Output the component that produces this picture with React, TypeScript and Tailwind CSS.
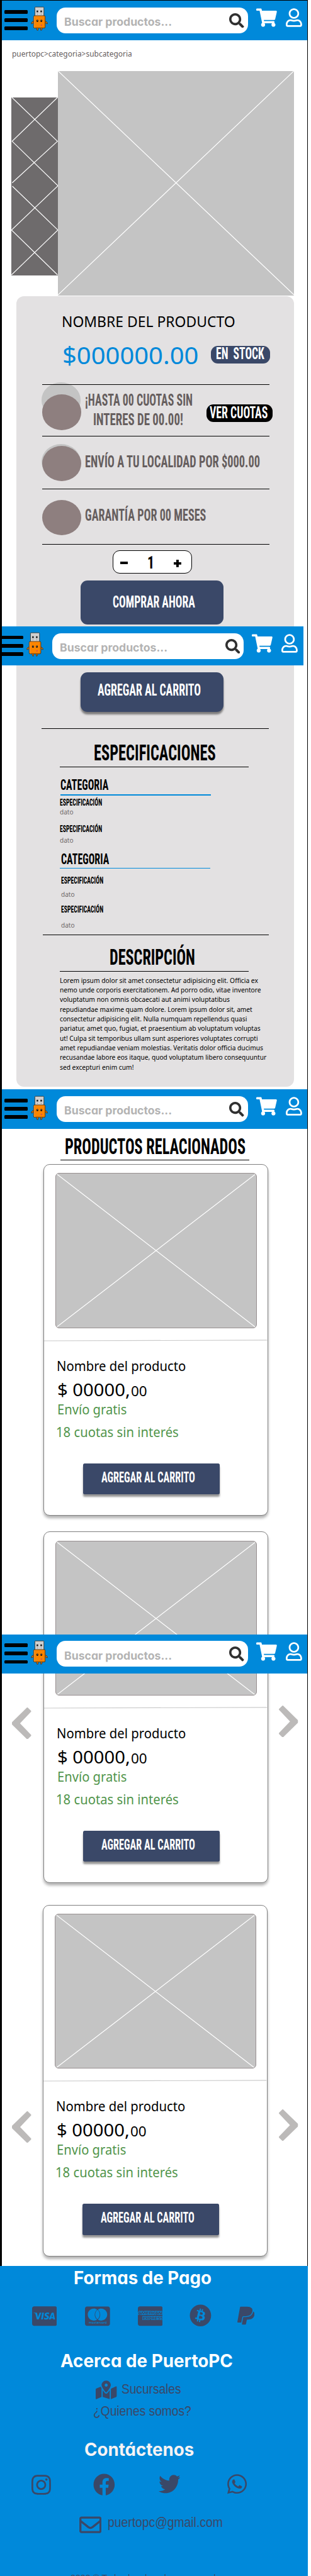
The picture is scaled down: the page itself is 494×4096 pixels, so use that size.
import { useLayoutEffect, useRef, type ReactNode } from "react";
import {
  FaCcVisa,
  FaCcMastercard,
  FaCcAmex,
  FaBitcoin,
  FaPaypal,
  FaMapMarkedAlt,
  FaInstagram,
  FaFacebook,
  FaTwitter,
  FaWhatsapp,
  FaRegEnvelope,
  FaRegUser,
  FaSearch,
  FaShoppingCart,
} from "react-icons/fa";

const display = "font-['Roboto',sans-serif] font-bold [font-stretch:75%]";
const body = "font-['Noto_Sans',sans-serif]";
const round = "font-['Inter',sans-serif] font-bold [font-feature-settings:'cv11']";
const arial = "font-['Liberation_Sans',sans-serif]";

/** One line of text, condensed or widened to fill the width of its box. */
function Fit({ className, children }: { className: string; children: ReactNode }) {
  const box = useRef<HTMLDivElement>(null);
  const line = useRef<HTMLSpanElement>(null);
  useLayoutEffect(() => {
    const fit = () => {
      if (!box.current || !line.current) return;
      const natural = line.current.offsetWidth;
      const wanted = parseFloat(getComputedStyle(box.current).width);
      if (natural > 0) line.current.style.transform = `scaleX(${wanted / natural})`;
    };
    fit();
    document.fonts?.ready.then(fit);
  }, []);
  return (
    <div ref={box} className={`shrink-0 whitespace-nowrap ${className}`}>
      <span ref={line} className="inline-block origin-left align-top">
        {children}
      </span>
    </div>
  );
}

function Robot() {
  return (
    <svg viewBox="250 52 140 200" preserveAspectRatio="none" className="h-[39.2px] w-[27.4px] shrink-0">
      <g stroke="#3b2a1a" strokeWidth="4" strokeLinejoin="round">
        <path d="M272 172l-14 8-5 13 8 1 11-9zM367 172l13 8 6 13-8 1-11-9z" fill="#e67d0c" />
        <path d="M295 228l4 17 8 3 4-20zM328 228l3 20 7-3 5-17z" fill="#e67d0c" />
        <rect x="283" y="58" width="73" height="74" rx="5" fill="#cfcfcf" />
        <rect x="272" y="128" width="95" height="101" rx="9" fill="#fb8500" />
      </g>
      <path d="M277 135v84q0 6 6 6" stroke="#e0a060" strokeWidth="4" fill="none" />
      <path d="M362 135v82q0 8-8 8h-66" stroke="#b96508" strokeWidth="4" fill="none" />
      <path d="M297 87h12v13h-12zM328 87h12v13h-12z" fill="#111" />
      <path d="M300 112h6v6h-6zM331 112h6v6h-6z" fill="#8a8a8a" />
      <ellipse cx="303" cy="170" rx="8" ry="10" fill="#1c1410" />
      <ellipse cx="335" cy="170" rx="8" ry="10" fill="#1c1410" />
      <circle cx="305" cy="166" r="2.5" fill="#fff" />
      <circle cx="333" cy="166" r="2.5" fill="#fff" />
      <circle cx="336" cy="205" r="6" fill="#d4524f" />
    </svg>
  );
}

function Header({ className }: { className: string }) {
  return (
    <header className={`flex items-start overflow-hidden bg-[#0089da] ${className}`}>
      <div className="mt-[14.7px] ml-[4px] flex w-[36.2px] shrink-0 flex-col gap-[7.2px]">
        <div className="h-[5.9px] rounded-[1.5px] bg-black" />
        <div className="h-[5.9px] rounded-[1.5px] bg-black" />
        <div className="h-[5.9px] rounded-[1.5px] bg-black" />
      </div>
      <div className="mt-[9.2px] ml-[5.3px] shrink-0">
        <Robot />
      </div>
      <div className="mt-[10.7px] ml-[14.1px] flex h-[41px] w-[303.7px] shrink-0 items-start rounded-[14px] bg-white">
        <Fit className={`mt-[16.2px] ml-[11.7px] h-[13px] w-[171.4px] text-[18px] leading-[13px] text-[#b3b3b3] ${round}`}>
          Buscar productos...
        </Fit>
        <FaSearch className="mt-[9px] ml-[91px] h-[23.6px] w-[23.6px] shrink-0 text-[#303030]" />
      </div>
      <FaShoppingCart className="mt-[12px] ml-[12.9px] h-[30px] w-[32.8px] shrink-0 text-white" />
      <FaRegUser className="mt-[12px] ml-[14.2px] h-[30px] w-[25.8px] shrink-0 text-white" />
    </header>
  );
}

function Gallery() {
  return (
    <section className="mt-[22.8px] flex items-start pl-[14.2px]">
      <svg
        viewBox="0 0 74.8 282.6"
        preserveAspectRatio="none"
        className="mt-[42.4px] h-[282.6px] w-[74.1px] shrink-0 bg-[#6e6b6c]"
      >
        <path
          d="M1 0L74 69.6L1.3 135.7M74 0L1.3 69.6L74.7 140.4L.3 210.8L74 282M1.6 141L74.7 210.8L.3 282"
          fill="none"
          stroke="#fff"
          strokeWidth="1.2"
        />
      </svg>
      <svg
        viewBox="0 0 378.7 356.7"
        preserveAspectRatio="none"
        className="h-[356.7px] w-[375.2px] shrink-0 bg-[#c4c4c4]"
      >
        <path d="M.5 0L378.7 356M378.2 0L0 356" stroke="#fff" strokeWidth="1.2" />
      </svg>
    </section>
  );
}

function Circle({ className }: { className: string }) {
  return <div className={`h-[56.5px] w-[62.4px] rounded-[50%] ${className}`} />;
}

function Rule({ className }: { className: string }) {
  return <div className={`relative z-10 shrink-0 ${className}`} />;
}

const benefit = `h-[18px] text-[25.2px] leading-[18px] text-[#665e5e] ${display}`;

function Purchase() {
  return (
    <>
      <Fit className={`mt-[31.4px] ml-[72.2px] h-[17.1px] w-[276px] text-[24px] leading-[17.1px] text-black ${body}`}>
        NOMBRE DEL PRODUCTO
      </Fit>
      <div className="mt-[30.5px] ml-[73.2px] flex h-[28.1px] shrink-0">
        <Fit className={`h-[28.4px] w-[216.9px] text-[38.5px] leading-[28.4px] text-[#0089da] ${body}`}>$000000.00</Fit>
        <div className="ml-[19.2px] h-[28.1px] w-[94.1px] rounded-[11px] bg-[#3a4868] pt-[4.5px] pl-[7.5px]">
          <Fit className={`h-[18px] w-[76.9px] text-[25px] leading-[18px] text-white ${display}`}>EN&nbsp; STOCK</Fit>
        </div>
      </div>
      <Rule className="mt-[33.2px] ml-[41.3px] h-px w-[361.1px] bg-black" />
      <div className="ml-[41.3px] flex h-[81.4px] shrink-0 items-start">
        <div className="relative pt-[15.5px]">
          <Circle className="absolute top-[-3.5px] left-[-1.2px] bg-[#c4c4c4]" />
          <Circle className="relative bg-[#8e7f7f]" />
        </div>
        <div className="ml-[5.1px] pt-[16.2px]">
          <Fit className={`w-[171.1px] ${benefit}`}>¡HASTA 00 CUOTAS SIN</Fit>
          <Fit className={`mt-[12.6px] ml-[13.9px] w-[143px] ${benefit}`}>INTERES DE 00.00!</Fit>
        </div>
        <div className="mt-[30.7px] ml-[22.7px] h-[28.1px] w-[104.6px] rounded-[11px] bg-black pt-[5.5px] pl-[5.1px]">
          <Fit className={`h-[18px] w-[92.1px] text-[25px] leading-[18px] text-white ${display}`}>VER CUOTAS</Fit>
        </div>
      </div>
      <Rule className="ml-[41.3px] h-px w-[361.1px] bg-black" />
      <div className="ml-[41.3px] flex h-[82.6px] shrink-0 items-start">
        <div className="relative pt-[14.2px]">
          <Circle className="absolute top-[11.6px] left-[-1.2px] bg-[#c4c4c4]" />
          <Circle className="relative bg-[#8e7f7f]" />
        </div>
        <Fit className={`mt-[31.6px] ml-[5.1px] w-[278.2px] ${benefit}`}>ENVÍO A TU LOCALIDAD POR $000.00</Fit>
      </div>
      <Rule className="ml-[41.3px] h-px w-[361.1px] bg-black" />
      <div className="ml-[41.3px] flex h-[87.2px] shrink-0 items-start">
        <Circle className="mt-[16.6px] bg-[#8e7f7f]" />
        <Fit className={`mt-[32.6px] ml-[5.1px] w-[192.5px] ${benefit}`}>GARANTÍA POR 00 MESES</Fit>
      </div>
      <Rule className="ml-[41.3px] h-px w-[361.1px] bg-black" />
      <div className="mt-[8.5px] ml-[152.9px] flex h-[37.4px] w-[126.1px] shrink-0 items-start rounded-[11px] border border-black bg-white">
        <div className="mt-[17.5px] ml-[11.6px] h-[3.8px] w-[11.7px] bg-black" />
        <Fit className={`mt-[9.4px] ml-[31.3px] h-[20px] w-[11px] text-[28px] leading-[20px] text-black ${display}`}>1</Fit>
        <svg viewBox="0 0 12 12" preserveAspectRatio="none" className="mt-[14.6px] ml-[30.7px] h-[11.7px] w-[11.9px]">
          <path d="M4 0h4v4h4v4H8v4H4V8H0V4h4z" />
        </svg>
      </div>
      <button className="mt-[10.8px] ml-[102.4px] flex h-[70.5px] w-[226.8px] shrink-0 items-start rounded-[11px] bg-[#3a4868]">
        <Fit className={`mt-[25.3px] ml-[51.1px] h-[18px] w-[131px] text-left text-[25.5px] leading-[18px] text-white ${display}`}>
          COMPRAR AHORA
        </Fit>
      </button>
      <button className="mt-[75.5px] ml-[102.4px] flex h-[63.7px] w-[226.8px] shrink-0 items-start rounded-[11px] bg-[#3a4868] shadow-[0_4px_3px_rgba(0,0,0,0.45)]">
        <Fit className={`mt-[19.6px] ml-[27.3px] h-[18px] w-[163.8px] text-left text-[25.5px] leading-[18px] text-white ${display}`}>
          AGREGAR AL CARRITO
        </Fit>
      </button>
      <Rule className="mt-[25.4px] ml-[40.1px] h-px w-[361.1px] bg-black" />
    </>
  );
}

const category = `h-[16.5px] w-[75.9px] text-[23px] leading-[16.5px] text-black ${display}`;
const spec = `h-[10px] w-[66.8px] text-[14px] leading-[10px] text-black ${display}`;
const datum = `h-[8.4px] w-[21.4px] text-[11.3px] leading-[8.4px] text-[#6e6868] ${body}`;

function Specs() {
  return (
    <>
      <Fit className={`mt-[26.1px] ml-[123.2px] h-[25.2px] w-[193.5px] text-[35.4px] leading-[25.2px] text-black ${display}`}>
        ESPECIFICACIONES
      </Fit>
      <Rule className="mt-[9px] ml-[69.3px] h-[1.2px] w-[299.9px] bg-black" />
      <Fit className={`mt-[20.2px] ml-[69.9px] ${category}`}>CATEGORIA</Fit>
      <Rule className="mt-[6.3px] ml-[70.6px] h-[1.3px] w-[238.7px] bg-[#0089da]" />
      <Fit className={`mt-[6.1px] ml-[69.7px] ${spec}`}>ESPECIFICACIÓN</Fit>
      <Fit className={`mt-[6.6px] ml-[69.7px] ${datum}`}>dato</Fit>
      <Fit className={`mt-[17.3px] ml-[69.7px] ${spec}`}>ESPECIFICACIÓN</Fit>
      <Fit className={`mt-[9.3px] ml-[69.7px] ${datum}`}>dato</Fit>
      <Fit className={`mt-[18.6px] ml-[71.1px] ${category}`}>CATEGORIA</Fit>
      <Rule className="mt-[4px] ml-[69.3px] h-[1.2px] w-[238.7px] bg-[#0089da]" />
      <Fit className={`mt-[14.2px] ml-[71px] ${spec}`}>ESPECIFICACIÓN</Fit>
      <Fit className={`mt-[12.7px] ml-[71px] ${datum}`}>dato</Fit>
      <Fit className={`mt-[15px] ml-[71px] ${spec}`}>ESPECIFICACIÓN</Fit>
      <Fit className={`mt-[16.1px] ml-[71px] ${datum}`}>dato</Fit>
      <Rule className="mt-[10.3px] ml-[42.6px] h-[1.2px] w-[358.6px] bg-black" />
    </>
  );
}

function Description() {
  const line = `h-[15.35px] text-[10.8px] leading-[15.35px] text-black ${body}`;
  return (
    <>
      <Fit className={`mt-[22.7px] ml-[148.5px] h-[24.5px] w-[135.7px] text-[34.8px] leading-[24.5px] text-black ${display}`}>
        DESCRIPCIÓN
      </Fit>
      <Rule className="mt-[9.4px] ml-[69.3px] h-[1.2px] w-[299.9px] bg-black" />
      <div className="mt-[5.7px] ml-[69.7px] flex flex-col">
        <Fit className={`w-[315px] ${line}`}>Lorem ipsum dolor sit amet consectetur adipisicing elit. Officia ex</Fit>
        <Fit className={`w-[319.2px] ${line}`}>nemo unde corporis exercitationem. Ad porro odio, vitae inventore</Fit>
        <Fit className={`w-[269.6px] ${line}`}>voluptatum non omnis obcaecati aut animi voluptatibus</Fit>
        <Fit className={`w-[305.9px] ${line}`}>repudiandae maxime quam dolore. Lorem ipsum dolor sit, amet</Fit>
        <Fit className={`w-[297.4px] ${line}`}>consectetur adipisicing elit. Nulla numquam repellendus quasi</Fit>
        <Fit className={`w-[318.5px] ${line}`}>pariatur, amet quo, fugiat, et praesentium ab voluptatum voluptas</Fit>
        <Fit className={`w-[315px] ${line}`}>ut! Culpa sit temporibus ullam sunt asperiores voluptates corrupti</Fit>
        <Fit className={`w-[322.6px] ${line}`}>amet repudiandae veniam molestias. Veritatis dolor officia ducimus</Fit>
        <Fit className={`w-[327.9px] ${line}`}>recusandae labore eos itaque, quod voluptatum libero consequuntur</Fit>
        <Fit className={`w-[117.5px] ${line}`}>sed excepturi enim cum!</Fit>
      </div>
    </>
  );
}

function ProductCard({ className }: { className: string }) {
  return (
    <article
      className={`flex h-[559px] w-[356.3px] shrink-0 flex-col items-start rounded-[10px] border border-[#808080] bg-white shadow-[0_4px_4px_rgba(0,0,0,0.3)] ${className}`}
    >
      <svg
        viewBox="0 0 323 246.8"
        preserveAspectRatio="none"
        className="mt-[13.1px] ml-[17.8px] h-[246.8px] w-[320px] shrink-0 rounded-[6px] border border-[#978f90] bg-[#c4c4c4]"
      >
        <path d="M1.5 1L321 245.8M321 1.5L1.5 245.8" stroke="#fff" strokeWidth="1.2" />
      </svg>
      <svg viewBox="0 0 358 3" preserveAspectRatio="none" className="mt-[17.8px] h-[3px] w-full shrink-0">
        <path d="M0 2L358 .9" stroke="#cbcbcb" strokeWidth="1.1" />
      </svg>
      <Fit className={`mt-[30.8px] ml-[20.1px] h-[16px] w-[205.7px] text-[22.2px] leading-[16px] text-black ${body}`}>
        Nombre del producto
      </Fit>
      <div className={`mt-[20.4px] ml-[20.4px] flex h-[19.7px] shrink-0 items-end text-black ${body}`}>
        <Fit className="h-[19.7px] w-[115.9px] text-[27px] leading-[19.7px]">$ 00000,</Fit>
        <Fit className="ml-[1.7px] h-[15.8px] w-[26px] text-[21.6px] leading-[15.8px]">00</Fit>
      </div>
      <Fit className={`mt-[13.2px] ml-[20.4px] h-[16px] w-[110px] text-[22.2px] leading-[16px] text-[#51954b] ${body}`}>
        Envío gratis
      </Fit>
      <Fit className={`mt-[19.6px] ml-[19.2px] h-[15.8px] w-[195.1px] text-[22px] leading-[15.8px] text-[#51954b] ${body}`}>
        18 cuotas sin interés
      </Fit>
      <button className="mt-[42.3px] ml-[61.4px] flex h-[49.6px] w-[216.9px] shrink-0 items-start rounded-[2.5px] bg-[#3a4868] shadow-[0_4px_3px_rgba(0,0,0,0.42)]">
        <Fit className={`mt-[15.5px] ml-[29.2px] h-[16.3px] w-[148.6px] text-left text-[23px] leading-[16.3px] text-white ${display}`}>
          AGREGAR AL CARRITO
        </Fit>
      </button>
    </article>
  );
}

function Chevron({ className }: { className: string }) {
  return (
    <svg viewBox="0 0 31 50" preserveAspectRatio="none" className={`w-[30.5px] shrink-0 ${className}`}>
      <path
        d="M24.8 1.5L29.5 6L11 25L29.5 44L24.8 48.5L1.5 26.2V23.8Z"
        fill="#bcbab9"
        stroke="#bcbab9"
        strokeWidth="3"
        strokeLinejoin="round"
      />
    </svg>
  );
}

function Footer() {
  const title = `text-[28px] h-[20.4px] leading-[20.4px] ${round}`;
  return (
    <footer className="absolute top-[3602.9px] left-0 flex h-[493.1px] w-full flex-col items-start overflow-hidden bg-[#0089da] text-[#3a4868]">
      <Fit className={`mt-[9.1px] ml-[116.6px] w-[218.6px] text-white ${title}`}>Formas de Pago</Fit>
      <div className="mt-[33.1px] flex h-[35.6px] shrink-0 items-center pl-[50.7px]">
        <FaCcVisa className="h-[35.6px] w-[39.7px]" />
        <FaCcMastercard className="ml-[45.1px] h-[35.6px] w-[39.7px]" />
        <FaCcAmex className="ml-[43.4px] h-[35.6px] w-[39.7px]" />
        <FaBitcoin className="-mt-[3px] ml-[42.5px] h-[35.6px] w-[34.9px]" preserveAspectRatio="none" />
        <FaPaypal className="-mt-[3px] ml-[41.5px] h-[32px] w-[27.3px]" preserveAspectRatio="none" />
      </div>
      <Fit className={`mt-[42.6px] ml-[95.8px] w-[273.8px] text-white ${title}`}>Acerca de PuertoPC</Fit>
      <div className="mt-[21.2px] flex h-[30px] shrink-0 pl-[152.2px]">
        <FaMapMarkedAlt className="h-[30px] w-[33.4px]" />
        <Fit className={`mt-[6.2px] ml-[7.6px] h-[16.3px] w-[94.7px] text-[22.6px] leading-[16.3px] ${arial}`}>Sucursales</Fit>
      </div>
      <Fit className={`mt-[10.9px] ml-[147.6px] h-[16.3px] w-[155.5px] text-[22.6px] leading-[16.3px] ${arial}`}>
        ¿Quienes somos?
      </Fit>
      <Fit className={`mt-[42.2px] ml-[133.7px] w-[173.9px] text-[#f7f3f4] ${title}`}>Contáctenos</Fit>
      <div className="mt-[28px] flex h-[36px] shrink-0 items-start pl-[50.1px]">
        <FaInstagram className="h-[36px] w-[30.9px]" preserveAspectRatio="none" />
        <FaFacebook className="mt-[-.5px] ml-[67.5px] h-[35.6px] w-[34.7px]" preserveAspectRatio="none" />
        <FaTwitter className="mt-[-.9px] ml-[68.8px] h-[35.6px] w-[34.5px]" preserveAspectRatio="none" />
        <FaWhatsapp className="-mt-[1px] ml-[74.1px] h-[35.6px] w-[31.1px]" preserveAspectRatio="none" />
      </div>
      <div className="mt-[28px] flex h-[35.2px] shrink-0 items-start pl-[125.8px]">
        <FaRegEnvelope className="h-[35.2px] w-[35.3px]" />
        <Fit className={`mt-[6.3px] ml-[10.1px] h-[16.3px] w-[182.9px] text-[22.6px] leading-[16.3px] ${arial}`}>
          puertopc@gmail.com
        </Fit>
      </div>
      <Fit className={`mt-[61.4px] ml-[112px] h-[10.2px] w-[245.7px] text-[14.2px] leading-[10.2px] ${arial}`}>
        2022 © Todos los derechos reservados
      </Fit>
    </footer>
  );
}

export default function App() {
  return (
    <div className="h-[4096px] w-[494px] overflow-hidden bg-white">
      <div className="relative h-[4096px] w-[489.3px] bg-black pt-px pr-[1.2px] pl-[3.4px]">
        <div className="relative h-[4095px] overflow-hidden bg-white">
          <Header className="h-[62.7px]" />
          <Fit className={`mt-[16px] ml-[15.5px] h-[10.5px] w-[190.9px] text-[13.4px] leading-[10.5px] text-[#665e5e] ${body}`}>
            puertopc&gt;categoria&gt;subcategoria
          </Fit>
          <Gallery />
          <main className="mt-px ml-[22.4px] flex h-[1257px] w-[441.1px] flex-col items-start rounded-[12px] bg-[#e3e1e2]">
            <Purchase />
            <Specs />
            <Description />
          </main>
          <Header className="mt-[4.8px] h-[62.5px]" />
          <section className="flex flex-col items-start">
            <Fit className={`mt-[15.6px] ml-[99.9px] h-[24.3px] w-[287.3px] text-[34.2px] leading-[24.3px] text-black ${display}`}>
              PRODUCTOS RELACIONADOS
            </Fit>
            <Rule className="mt-[9.3px] ml-[93px] h-[1.2px] w-[299.9px] bg-black" />
            <ProductCard className="mt-[6px] ml-[65.9px]" />
            <div className="mt-[25.1px] flex items-start">
              <Chevron className="mt-[279.2px] ml-[16.1px] h-[50.4px]" />
              <ProductCard className="ml-[19.3px]" />
              <Chevron className="mt-[276.2px] ml-[17.1px] h-[50.4px] -scale-x-100" />
            </div>
            <div className="mt-[34.1px] flex items-start">
              <Chevron className="mt-[328.7px] ml-[16.1px] h-[50.2px]" />
              <ProductCard className="ml-[18.3px]" />
              <Chevron className="mt-[325.5px] ml-[18.1px] h-[50.2px] -scale-x-100" />
            </div>
          </section>
          <div className="absolute top-[994.9px] left-0 z-20 w-[478.9px] overflow-hidden">
            <Header className="-ml-[6.9px] h-[62.4px] w-[485.8px]" />
          </div>
          <Header className="absolute top-[2597.7px] left-0 z-20 h-[62.7px] w-full" />
        </div>
        <Footer />
      </div>
    </div>
  );
}
